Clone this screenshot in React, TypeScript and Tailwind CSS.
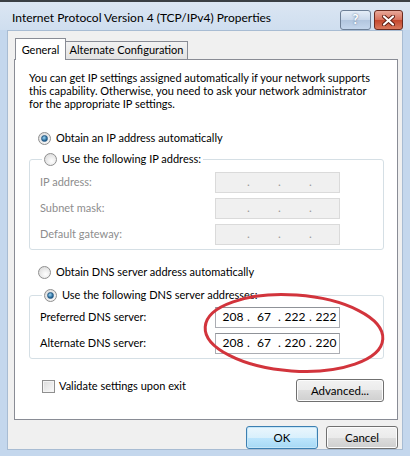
import React from "react";

const font = "font-['Lato','Liberation_Sans',sans-serif]";

const Radio: React.FC<{ checked?: boolean }> = ({ checked }) => (
  <span className="relative inline-flex w-[13px] h-[13px] shrink-0 items-center justify-center rounded-full border border-[#8f8f8f] bg-[radial-gradient(circle_at_60%_65%,#ffffff,#d4d4d4)]">
    {checked && (
      <span className="w-[7px] h-[7px] rounded-full bg-[radial-gradient(circle_at_40%_35%,#9fd7f5,#1c5e8f_70%)] border border-[#2b5d87]"></span>
    )}
  </span>
);

const IpField: React.FC<{ parts?: string[]; disabled?: boolean }> = ({ parts, disabled }) => {
  const segs = parts ?? ["", "", "", ""];
  return (
    <div
      className={
        "flex items-center w-[125px] h-[21px] pl-[6px] border text-[12px] " +
        (disabled
          ? "bg-[#f0f0f0] border-[#dadada] text-[#9a9a9a]"
          : "bg-white border-[#abadb3] border-t-[#8f9298] text-black")
      }
    >
      {segs.map((s, i) => (
        <React.Fragment key={i}>
          <span className="w-[22px] text-center">{s}</span>
          {i < 3 && <span className="w-[9px] text-center">.</span>}
        </React.Fragment>
      ))}
    </div>
  );
};

const Button: React.FC<{ label: string; primary?: boolean; className?: string }> = ({
  label,
  primary,
  className,
}) => (
  <button
    className={
      "h-[23px] rounded-[3px] border text-[11.5px] text-black leading-none " +
      (primary
        ? "border-[#3c7fb1] bg-[linear-gradient(#eaf6fd_0%,#d9f0fc_50%,#bee6fd_50%,#a7d9f5_100%)] shadow-[inset_0_0_0_1px_#c5e6f8] "
        : "border-[#707070] bg-[linear-gradient(#f2f2f2_0%,#ebebeb_50%,#dddddd_50%,#cfcfcf_100%)] shadow-[inset_0_0_0_1px_#fcfcfc] ") +
      (className ?? "")
    }
  >
    {label}
  </button>
);

const App: React.FC = () => {
  return (
    <div className={`w-[410px] h-[456px] overflow-hidden bg-[#c4d7ed] border-t-2 border-t-[#3a3f45] flex flex-col text-[11px] ${font}`}>
      {/* Title bar */}
      <div className="h-[28px] flex items-start bg-[linear-gradient(#dbe6f3,#cfdeef)] pl-[12px] pr-[7px]">
        <span className="mt-[7px] text-[12px] text-black whitespace-nowrap">
          Internet Protocol Version 4 (TCP/IPv4) Properties
        </span>
        <div className="ml-auto mt-[8px] flex gap-[3px]">
          <div className="w-[31px] h-[20px] rounded-[3px] border border-[#6d7f96] bg-[linear-gradient(#e4edf7_0%,#c9d8ea_50%,#b1c5de_50%,#c4d6ec_100%)] flex items-center justify-center text-white text-[13px] font-bold [text-shadow:0_0_2px_#4a6584]">
            ?
          </div>
          <div className="w-[29px] h-[20px] rounded-[3px] border border-[#6b2b20] bg-[linear-gradient(#e9a99a_0%,#d7705b_50%,#c2452b_50%,#d8775c_100%)] flex items-center justify-center">
            <svg width="13" height="11" viewBox="0 0 13 11">
              <path d="M2 1.5 L11 9.5 M11 1.5 L2 9.5" stroke="#5a1a10" strokeWidth="4" strokeLinecap="round" />
              <path d="M2 1.5 L11 9.5 M11 1.5 L2 9.5" stroke="#ffffff" strokeWidth="2.2" strokeLinecap="round" />
            </svg>
          </div>
        </div>
      </div>

      {/* Client area */}
      <div className="mx-[7px] h-[420px] bg-[#f0f0f0] border border-[#a8bcd3] px-[6px] pt-[6px]">
        {/* Tabs */}
        <div className="flex items-end h-[22px] pl-[1px] whitespace-nowrap">
          <div className="relative z-10 h-[22px] w-[51px] bg-white border border-b-0 border-[#898c95] flex items-start justify-center pt-[3px] -mb-[1px]">
            General
          </div>
          <div className="h-[18px] w-[122px] border border-l-0 border-b-0 border-[#898c95] bg-[linear-gradient(#f2f2f2,#e3e3e3)] flex items-center justify-center">
            Alternate Configuration
          </div>
        </div>

        {/* Tab panel */}
        <div className="relative w-[384px] h-[361px] bg-white border border-[#898c95] pt-[11px] px-[14px]">
          <p className="w-[348px] leading-[13px] text-black">
            You can get IP settings assigned automatically if your network supports this capability. Otherwise, you need to ask your network administrator for the appropriate IP settings.
          </p>

          <div className="mt-[20px] pl-[9px] flex items-center gap-[5px] h-[16px]">
            <Radio checked />
            <span>Obtain an IP address automatically</span>
          </div>

          <fieldset className="mt-[5px] w-[355px] h-[99px] border border-[#d5dfe5] rounded-[3px] px-[10px]">
            <legend className="ml-[2px] px-[2px] flex items-center gap-[5px] text-black">
              <Radio />
              <span>Use the following IP address:</span>
            </legend>
            <div className="flex flex-col gap-[5px] mt-[4px] text-[#8d8d8d]">
              <div className="flex items-center">
                <span className="w-[175px]">IP address:</span>
                <IpField disabled />
              </div>
              <div className="flex items-center">
                <span className="w-[175px]">Subnet mask:</span>
                <IpField disabled />
              </div>
              <div className="flex items-center">
                <span className="w-[175px]">Default gateway:</span>
                <IpField disabled />
              </div>
            </div>
          </fieldset>

          <div className="mt-[14px] pl-[9px] flex items-center gap-[5px] h-[16px]">
            <Radio />
            <span>Obtain DNS server address automatically</span>
          </div>

          <fieldset className="mt-[7px] w-[355px] h-[72px] border border-[#d5dfe5] rounded-[3px] px-[10px]">
            <legend className="ml-[2px] px-[2px] flex items-center gap-[5px] text-black">
              <Radio checked />
              <span>Use the following DNS server addresses:</span>
            </legend>
            <div className="flex flex-col gap-[5px] mt-[3px] text-black">
              <div className="flex items-center">
                <span className="w-[175px]">Preferred DNS server:</span>
                <IpField parts={["208", "67", "222", "222"]} />
              </div>
              <div className="flex items-center">
                <span className="w-[175px]">Alternate DNS server:</span>
                <IpField parts={["208", "67", "220", "220"]} />
              </div>
            </div>
          </fieldset>

          <div className="mt-[17px] flex items-start justify-between pl-[13px] w-[355px]">
            <div className="flex items-center gap-[4px] mt-[2px]">
              <span className="w-[13px] h-[13px] border border-[#8f8f8f] bg-[linear-gradient(135deg,#dcdcdc,#fafafa)] shadow-[inset_0_0_0_1px_#f4f4f4]"></span>
              <span>Validate settings upon exit</span>
            </div>
            <Button label="Advanced..." className="w-[88px] mt-[3px]" />
          </div>

          {/* Red annotation ellipse */}
          <svg className="absolute left-[186px] top-[231px] pointer-events-none" width="186" height="84" viewBox="0 0 186 84">
            <ellipse cx="93" cy="42" rx="89" ry="38" fill="none" stroke="#d2343c" strokeWidth="3" transform="rotate(4 93 42)" />
          </svg>
        </div>

        {/* Footer buttons */}
        <div className="flex justify-end gap-[8px] mt-[6px] w-[384px]">
          <Button label="OK" primary className="w-[72px]" />
          <Button label="Cancel" className="w-[72px]" />
        </div>
      </div>
    </div>
  );
};

export default App;
